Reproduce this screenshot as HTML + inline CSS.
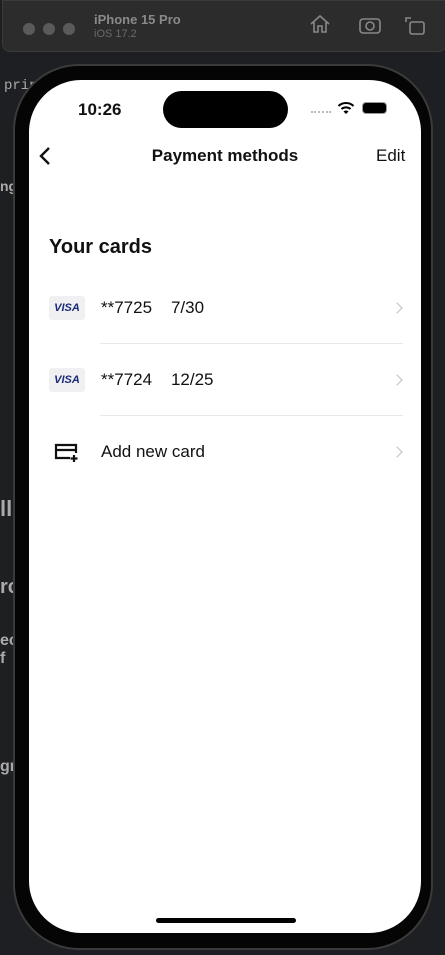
<!DOCTYPE html>
<html><head><meta charset="utf-8"><style>
*{margin:0;padding:0;box-sizing:border-box}
body{width:445px;height:955px;background:#1e1f22;position:relative;overflow:hidden;font-family:"Liberation Sans",sans-serif}
.bar{position:absolute;left:2px;top:0;width:445px;height:52px;background:#2c2c2c;border-radius:0 0 8px 8px;border:1px solid #3a3a3a}
.dot{position:absolute;top:22px;width:12px;height:12px;border-radius:50%;background:#5a5a5a}
.side{position:absolute;color:#aaa;font-size:14px;font-weight:bold}
.phone{position:absolute;left:13px;top:64px;width:420px;height:886px;border-radius:66px;background:#050505;border:2px solid #3a3a3a}
.screen{position:absolute;left:29px;top:80px;width:392px;height:853px;border-radius:52px;background:#fff;overflow:hidden}
.t{position:absolute;color:#111}
.visa{position:absolute;left:20px;width:36px;height:24px;background:#f0f0f2;border-radius:3px;color:#1a2a78;font-weight:bold;font-style:italic;font-size:11px;text-align:center;line-height:24px}
.row{position:absolute;left:72px;font-size:17px;color:#111}
.chev{position:absolute;left:364px;width:8px;height:8px;border-right:1.6px solid #bbb;border-top:1.6px solid #bbb;transform:rotate(45deg)}
.sep{position:absolute;left:71px;width:303px;height:1px;background:#e8e8e8}
</style></head><body>
<div class="bar">
<div class="dot" style="left:20px"></div><div class="dot" style="left:40px"></div><div class="dot" style="left:60px"></div>
<div style="position:absolute;left:91px;top:11px;color:#8a8a8a;font-weight:bold;font-size:13px">iPhone 15 Pro</div>
<div style="position:absolute;left:91px;top:27px;color:#6a6a6a;font-size:11px">iOS 17.2</div>
<svg style="position:absolute;left:306px;top:13px" width="22" height="20" viewBox="0 0 22 20" fill="none" stroke="#888" stroke-width="1.6"><path d="M2 10 11 2 20 10M5 8v10h4v-6h4v6h4V8"/></svg>
<svg style="position:absolute;left:355px;top:14px" width="24" height="20" viewBox="0 0 24 20" fill="none" stroke="#888" stroke-width="1.6"><rect x="2" y="4" width="20" height="14" rx="3"/><circle cx="12" cy="11" r="4"/></svg>
<svg style="position:absolute;left:401px;top:13px" width="22" height="22" viewBox="0 0 22 22" fill="none" stroke="#888" stroke-width="1.6"><rect x="6" y="8" width="14" height="12" rx="2"/><path d="M2 8V4h5"/></svg>
</div>
<div class="side" style="left:4px;top:78px;font-family:'Liberation Mono',monospace;font-weight:normal">prin</div>
<div class="side" style="left:0;top:178px">ng</div>
<div class="side" style="left:0;top:496px;font-size:22px">ll</div>
<div class="side" style="left:0;top:576px;font-size:20px">rc</div>
<div class="side" style="left:0;top:632px;font-size:16px">ec<br>f</div>
<div class="side" style="left:0;top:758px;font-size:16px">gr</div>
<div class="phone"></div>
<div class="screen">
<div class="t" style="left:49px;top:20px;font-size:17px;font-weight:bold">10:26</div>
<div style="position:absolute;left:134px;top:11px;width:125px;height:37px;border-radius:19px;background:#000"></div>
<div style="position:absolute;left:282px;top:31px;width:20px;border-top:2px dotted #bbb"></div>
<svg style="position:absolute;left:308px;top:21px" width="18" height="14" viewBox="0 0 18 14" fill="none" stroke="#000" stroke-width="2"><path d="M1.5 5a11 11 0 0 1 15 0M4.5 8a7 7 0 0 1 9 0"/><path d="M9 13 6.5 10.5a3.5 3.5 0 0 1 5 0z" fill="#000" stroke="none"/></svg>
<div style="position:absolute;left:333px;top:22px;width:25px;height:12px;border-radius:4px;background:#000;border:1.5px solid #999"></div>
<svg style="position:absolute;left:9px;top:66px" width="14" height="20" viewBox="0 0 14 20" fill="none" stroke="#111" stroke-width="2.4"><path d="M11 2 3 10l8 8"/></svg>
<div class="t" style="left:0;width:392px;text-align:center;top:66px;font-size:17px;font-weight:bold">Payment methods</div>
<div class="t" style="left:347px;top:66px;font-size:17px">Edit</div>
<div class="t" style="left:20px;top:156px;font-size:20px;font-weight:bold">Your cards</div>
<div class="visa" style="top:216px">VISA</div>
<div class="row" style="top:218px">**7725&nbsp;&nbsp;&nbsp;&nbsp;7/30</div>
<div class="chev" style="top:224px"></div>
<div class="sep" style="top:263px"></div>
<div class="visa" style="top:288px">VISA</div>
<div class="row" style="top:290px">**7724&nbsp;&nbsp;&nbsp;&nbsp;12/25</div>
<div class="chev" style="top:296px"></div>
<div class="sep" style="top:335px"></div>
<svg style="position:absolute;left:25px;top:363px" width="26" height="20" viewBox="0 0 26 20" fill="none" stroke="#111" stroke-width="2.2"><path d="M16 15H2V2h20v8M2 7h20"/><path d="M20 12v7M16.5 15.5h7"/></svg>
<div class="row" style="top:362px">Add new card</div>
<div class="chev" style="top:368px"></div>
<div style="position:absolute;left:127px;top:838px;width:140px;height:5px;border-radius:3px;background:#000"></div>
</div>
</body></html>
